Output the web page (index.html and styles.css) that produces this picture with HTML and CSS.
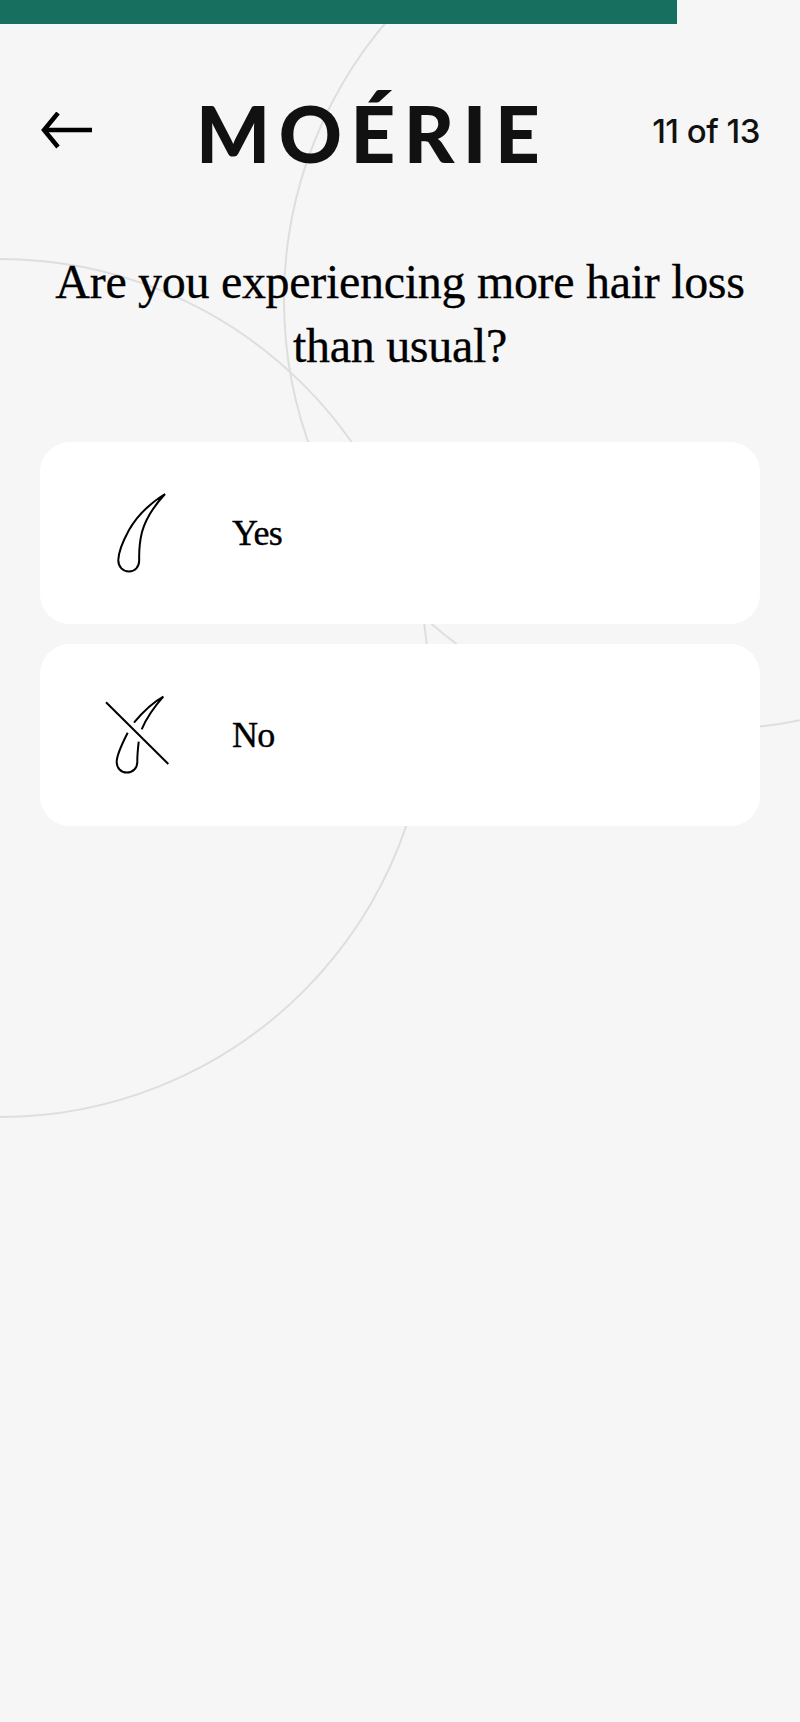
FILE: index.html
```html
<!DOCTYPE html>
<html lang="en">
<head>
    <meta charset="UTF-8">
    <meta name="viewport" content="width=device-width, initial-scale=1.0">
    <title>Moérie Hair Quiz</title>
    <link rel="stylesheet" href="styles.css">
</head>
<body>

    <!-- Background Circles -->
    <div class="circles">
        <div class="circle circle-left"></div>
        <div class="circle circle-right"></div>
    </div>

    <!-- Progress -->
    <div class="progress">
        <div class="progress-fill"></div>
    </div>

    <header>
        <a class="back-link" href="#" aria-label="Back">
            <svg width="52" height="38" viewBox="0 0 52 38" fill="none" stroke="#000" stroke-width="4.5">
                <path d="M52 18H4"/>
                <path d="M18 1L4 18L18 35"/>
            </svg>
        </a>
        <div class="logo">MOÉRIE</div>
        <div class="step-count">11 of 13</div>
    </header>

    <h1>Are you experiencing more hair loss than usual?</h1>

    <!-- Answers -->
    <div class="answers">
        <button class="answer-card">
            <svg class="hair-icon" width="72" height="96" viewBox="0 0 72 96" fill="none" stroke="#000" stroke-width="2">
                <path d="M61 9C45 19 33 31 25 45C19 56 14.5 67 14.3 75C14.2 82 19 86.5 25 86.5C31 86.5 35.3 82 35.2 75C35 67 35 59 38 47C41 36 50 21 61 9Z"/>
            </svg>
            <span>Yes</span>
        </button>
        <button class="answer-card">
            <svg class="hair-icon" width="72" height="96" viewBox="0 0 72 96" fill="none" stroke="#000" stroke-width="2">
                <path d="M30 35.7C38 26 48 16 59.3 9.7C51 19 43 30 37.7 42.3"/>
                <path d="M23.7 45.7C18 57 12.8 67 12.7 74.7C12.6 81 17 85.5 22.7 85.5C29 85.5 33.4 81 33.3 74.7C33.2 68 34 61 34.7 54.7"/>
                <path d="M2 15.3L64.3 77"/>
            </svg>
            <span>No</span>
        </button>
    </div>

</body>
</html>
```

FILE: styles.css
```css
/* General Styling */
body {
    margin: 0;
    min-height: 1722px;
    background-color: #f6f6f6;
    color: #000;
    position: relative;
}

/* Background Circles */
.circles {
    position: absolute;
    top: 0;
    left: 0;
    right: 0;
    bottom: 0;
    overflow: hidden;
}

.circle {
    position: absolute;
    width: 860px;
    height: 860px;
    border: 2px solid #dedede;
    border-radius: 50%;
    box-sizing: border-box;
}

.circle-left {
    left: -430px;
    top: 258px;
}

.circle-right {
    left: 283px;
    top: -130px;
}

/* Progress */
.progress {
    position: relative;
    height: 24px;
}

.progress-fill {
    width: 677px;
    height: 100%;
    background-color: #176f60;
}

/* Header */
header {
    position: relative;
    display: flex;
    justify-content: space-between;
    align-items: center;
    height: 110px;
    margin-top: 52px;
    padding: 0 40px;
}

.back-link {
    display: block;
    height: 38px;
}

.logo {
    padding-top: 4px;
    font-family: "Lato", sans-serif;
    font-weight: 900;
    font-size: 78px;
    line-height: 1;
    letter-spacing: 8.5px;
    color: #111;
}

.step-count {
    font-family: "Inter", sans-serif;
    font-weight: 500;
    font-size: 33px;
    letter-spacing: -0.5px;
    color: #111;
}

/* Question */
h1 {
    position: relative;
    margin: 64px 40px 0;
    font-family: "Liberation Serif", serif;
    font-weight: 400;
    font-size: 48px;
    line-height: 64px;
    letter-spacing: -0.3px;
    -webkit-text-stroke: 0.3px #000;
    text-align: center;
}

/* Answers */
.answers {
    position: relative;
    display: flex;
    flex-direction: column;
    gap: 20px;
    margin: 64px 40px 0;
}

.answer-card {
    display: flex;
    align-items: center;
    gap: 56px;
    height: 182px;
    padding: 0 0 0 64px;
    background-color: #fff;
    border: none;
    border-radius: 30px;
    font-family: "Liberation Serif", serif;
    font-size: 36px;
    letter-spacing: -0.8px;
    -webkit-text-stroke: 0.4px #000;
    color: #000;
    text-align: left;
}
```
